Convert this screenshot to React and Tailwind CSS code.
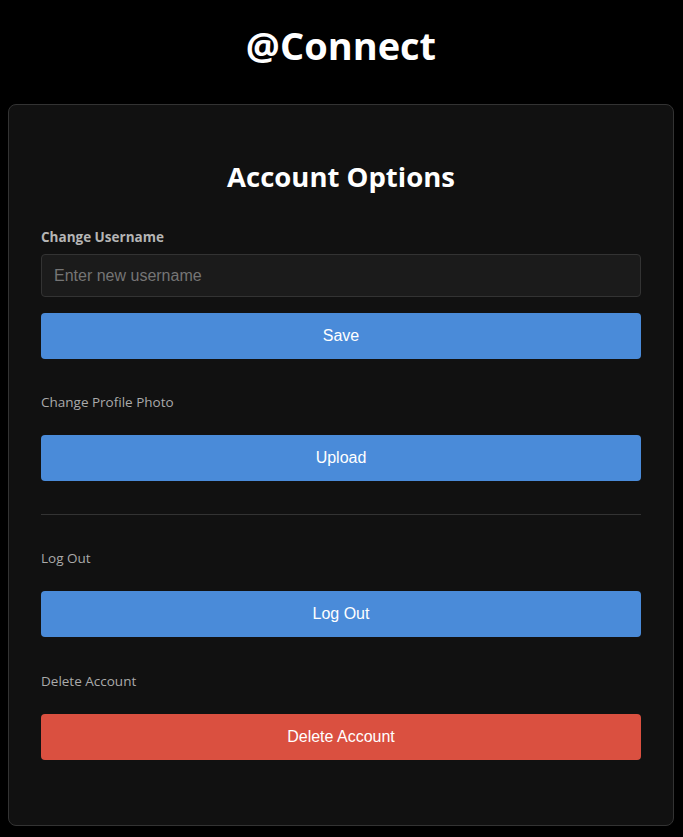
import { useState } from 'react';

const Section = ({ label, children }) => (
    <div>
        <div className="text-[13.5px] leading-4 text-[#aaaaaa]">{label}</div>
        {children}
    </div>
);

const App = () => {
    const [username, setUsername] = useState('');

    const btn = 'w-full h-[46px] rounded text-white text-[16px] font-["Liberation_Sans",Arial,sans-serif]';

    return (
        <div className="min-h-screen bg-black pl-2 pr-[9px] pb-3 font-['Open_Sans','Noto_Sans',sans-serif]">
            <h1 className="pt-[23px] pb-[37px] text-center text-[38px] leading-[44px] font-bold text-white">
                @Connect
            </h1>

            <div className="bg-[#111111] border border-[#333333] rounded-lg px-8 pt-[55px] pb-[65px]">
                <h2 className="text-center text-[27.5px] leading-[34px] font-bold text-white">Account Options</h2>

                <div className="mt-[35px]">
                    <label className="block text-[13.5px] leading-4 font-bold text-[#b5b5b5]">Change Username</label>
                    <input
                        type="text"
                        value={username}
                        placeholder="Enter new username"
                        onChange={e => setUsername(e.target.value)}
                        className="mt-[9px] w-full h-[43px] px-3 bg-[#1b1b1b] border border-[#333333] rounded text-[16px] text-white placeholder:text-[#757575] outline-none font-['Liberation_Sans',Arial,sans-serif]"
                    />
                    <button className={`mt-4 bg-[#4a8bd9] ${btn}`}>Save</button>
                </div>

                <div className="mt-[35px]">
                    <Section label="Change Profile Photo">
                        <button className={`mt-[25px] bg-[#4a8bd9] ${btn}`}>Upload</button>
                    </Section>
                </div>

                <div className="mt-[33px] h-px bg-[#333333]" />

                <div className="mt-[35px]">
                    <Section label="Log Out">
                        <button className={`mt-[25px] bg-[#4a8bd9] ${btn}`}>Log Out</button>
                    </Section>
                </div>

                <div className="mt-[36px]">
                    <Section label="Delete Account">
                        <button className={`mt-[25px] bg-[#da5040] ${btn}`}>Delete Account</button>
                    </Section>
                </div>
            </div>
        </div>
    );
};

export default App;
